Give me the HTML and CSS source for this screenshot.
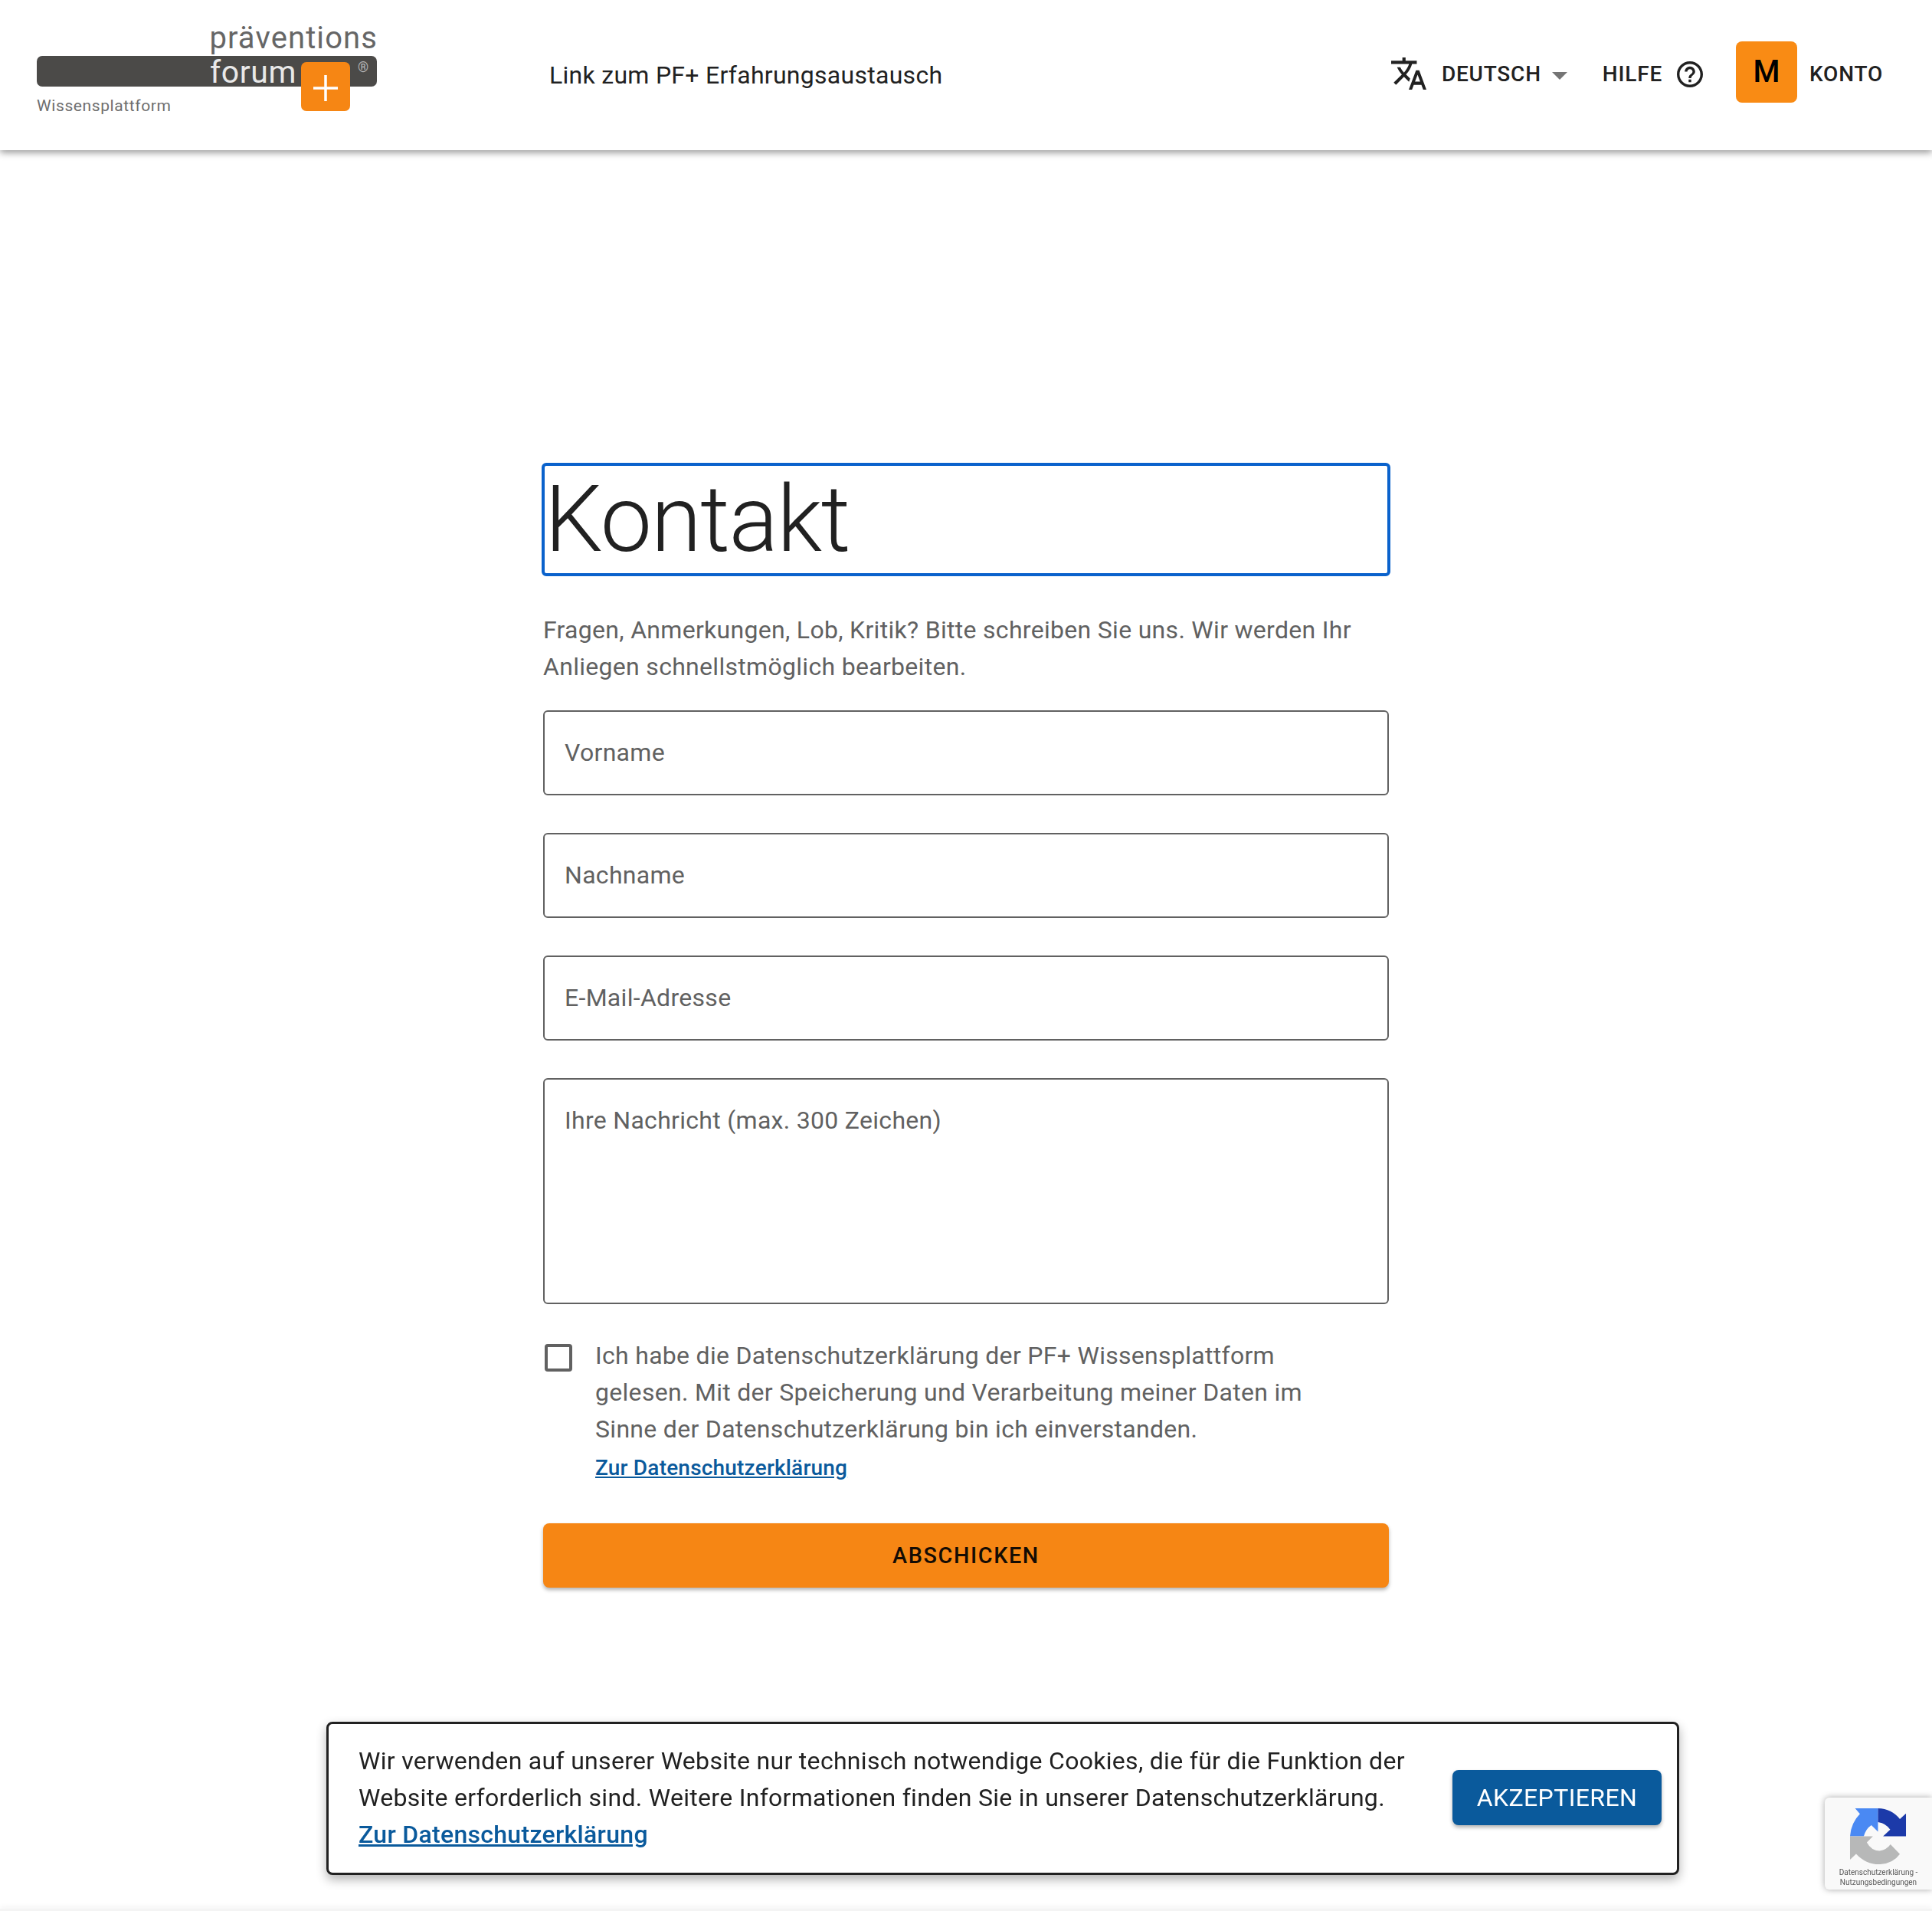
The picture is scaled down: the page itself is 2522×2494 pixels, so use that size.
FILE: index.html
```html
<!DOCTYPE html>
<html lang="de">
<head>
<meta charset="utf-8">
<title>Kontakt</title>
<link rel="stylesheet" href="styles.css">
</head>
<body>
<header class="header">
  <a class="logo">
    <span class="logo-top">präventions</span>
    <span class="logo-bar"></span>
    <span class="logo-forum">forum</span>
    <span class="logo-reg">®</span>
    <span class="logo-plus"><svg viewBox="0 0 64 64" width="64" height="64"><path d="M32 17v34M16 34h32" stroke="#fff" stroke-width="3.5" fill="none"/></svg></span>
    <span class="logo-sub">Wissensplattform</span>
  </a>
  <a class="nav-link">Link zum PF+ Erfahrungsaustausch</a>
  <div class="nav-right">
    <svg class="icon-translate" viewBox="1 2 22 20" width="46" height="42"><path fill="#212121" d="M12.87 15.07l-2.54-2.51.03-.03c1.74-1.94 2.98-4.17 3.71-6.53H17V4h-7V2H8v2H1v1.99h11.17C11.5 7.92 10.44 9.75 9 11.35 8.07 10.32 7.3 9.19 6.69 8h-2c.73 1.63 1.73 3.17 2.98 4.56l-5.09 5.02L4 19l5-5 3.11 3.11.76-2.04zM18.5 10h-2L12 22h2l1.12-3h4.75L21 22h2l-4.5-12zm-2.62 7l1.62-4.33L19.12 17h-3.24z"/></svg>
    <span class="nav-item nav-lang">DEUTSCH</span>
    <span class="caret"></span>
    <span class="nav-item nav-help">HILFE</span>
    <svg class="icon-help" viewBox="2 2 20 20" width="34" height="34"><path fill="#212121" d="M11 18h2v-2h-2v2zm1-16C6.48 2 2 6.48 2 12s4.48 10 10 10 10-4.48 10-10S17.52 2 12 2zm0 18c-4.41 0-8-3.59-8-8s3.59-8 8-8 8 3.59 8 8-3.59 8-8 8zm0-14c-2.21 0-4 1.79-4 4h2c0-1.1.9-2 2-2s2 .9 2 2c0 2-3 1.75-3 5h2c0-2.25 3-2.5 3-5 0-2.21-1.79-4-4-4z"/></svg>
    <span class="avatar">M</span>
    <span class="nav-item nav-account">KONTO</span>
  </div>
</header>

<main class="main">
  <form class="form">
    <h1 class="title">Kontakt</h1>
    <p class="intro">Fragen, Anmerkungen, Lob, Kritik? Bitte schreiben Sie uns. Wir werden Ihr Anliegen schnellstmöglich bearbeiten.</p>
    <input class="field field-line" type="text" placeholder="Vorname">
    <input class="field field-line" type="text" placeholder="Nachname">
    <input class="field field-line" type="text" placeholder="E-Mail-Adresse">
    <textarea class="field field-area" placeholder="Ihre Nachricht (max. 300 Zeichen)"></textarea>
    <div class="consent">
      <span class="checkbox"></span>
      <div class="consent-body">
        <p class="consent-text">Ich habe die Datenschutzerklärung der PF+ Wissensplattform gelesen. Mit der Speicherung und Verarbeitung meiner Daten im Sinne der Datenschutzerklärung bin ich einverstanden.</p>
        <a class="link link-small">Zur Datenschutzerklärung</a>
      </div>
    </div>
    <button class="submit" type="button">ABSCHICKEN</button>
  </form>
</main>

<footer class="footer"></footer>

<aside class="cookie">
  <div class="cookie-text">
    <p>Wir verwenden auf unserer Website nur technisch notwendige Cookies, die für die Funktion der Website erforderlich sind. Weitere Informationen finden Sie in unserer Datenschutzerklärung.</p>
    <a class="link">Zur Datenschutzerklärung</a>
  </div>
  <button class="accept" type="button">AKZEPTIEREN</button>
</aside>

<aside class="recaptcha">
  <svg class="recaptcha-icon" viewBox="340 412 232 232" width="77" height="77">
    <path fill="#4a89f3" d="M366 418H456V510L430 484Q408 498 400 528H346Q350 475 385 440Z"/>
    <path fill="#1c3aa9" d="M456 418Q510 420 542 460L566 438V528H476L504 502Q490 478 456 472Z"/>
    <path fill="#b7b8b8" d="M346 528H436L412 552Q430 585 462 585Q490 582 505 560L542 598Q515 635 465 638Q410 640 370 597L346 620Z"/>
  </svg>
  <span class="recaptcha-text">Datenschutzerklärung -<br>Nutzungsbedingungen</span>
</aside>
</body>
</html>
```

FILE: styles.css
```css
* { box-sizing: border-box; }

html, body {
  margin: 0;
  height: 100%;
  overflow: hidden;
}

body {
  display: flex;
  flex-direction: column;
  background: #fff;
  color: #212121;
  font-family: Roboto, "Liberation Sans", sans-serif;
  font-size: 32px;
  line-height: 48px;
}

p { margin: 0; }

/* Header */
.header {
  flex: none;
  height: 196px;
  display: flex;
  align-items: center;
  background: #fff;
  box-shadow: 0 3px 9px rgba(0, 0, 0, 0.42);
  position: relative;
  z-index: 2;
}

.logo {
  display: block;
  position: relative;
  flex: none;
  width: 444px;
  height: 196px;
  margin-left: 48px;
}

.logo span { position: absolute; }

.logo-top {
  right: -1px;
  top: 26px;
  font-size: 40px;
  line-height: 48px;
  font-weight: 400;
  letter-spacing: 1.1px;
  color: #666;
}

.logo-bar {
  left: 0;
  right: 0;
  top: 73px;
  height: 40px;
  border-radius: 7px;
  background: #4b4a48;
}

.logo-forum {
  left: 226px;
  top: 70px;
  font-size: 41px;
  line-height: 48px;
  font-weight: 400;
  letter-spacing: 0.6px;
  color: #e8e8e8;
}

.logo-reg {
  left: 419px;
  top: 78px;
  font-size: 18px;
  line-height: 20px;
  color: #b8b8b8;
}

.logo-plus {
  left: 345px;
  top: 81px;
  width: 64px;
  height: 64px;
  border-radius: 7px;
  background: #f68614;
}

.logo-plus svg { display: block; }

.logo-sub {
  left: 0;
  top: 124px;
  font-size: 21px;
  line-height: 28px;
  letter-spacing: 0.6px;
  color: #6e6e6e;
}

.nav-link {
  margin-left: 225px;
  line-height: 48px;
  letter-spacing: 0.28px;
}

.nav-right {
  margin-left: auto;
  padding: 0 64px 2px 0;
  display: flex;
  align-items: center;
}

.nav-item {
  font-size: 28px;
  font-weight: 500;
  letter-spacing: 0.8px;
  line-height: 40px;
}

.icon-translate {
  margin: -3px 20px 0 0;
}

.caret {
  width: 0;
  height: 0;
  margin: 4px 0 0 14px;
  border-left: 10px solid transparent;
  border-right: 10px solid transparent;
  border-top: 10px solid #757575;
}

.nav-help { margin-left: 46px; }

.icon-help { margin-left: 19px; }

.avatar {
  width: 80px;
  height: 80px;
  margin: -6px 16px 0 43px;
  border-radius: 8px;
  background: #f98b14;
  color: #000;
  font-size: 40px;
  font-weight: 500;
  display: flex;
  align-items: center;
  justify-content: center;
}

/* Form */
.main {
  flex: 1;
  display: flex;
  justify-content: center;
  padding-top: 408px;
}

.form {
  width: 1104px;
  display: flex;
  flex-direction: column;
}

.title {
  margin: 0 -2px;
  height: 148px;
  padding-left: 0;
  border: 4px solid #0a62cc;
  border-radius: 6px;
  font-size: 120px;
  line-height: 140px;
  font-weight: 300;
  letter-spacing: -1.4px;
  color: #212121;
}

.intro {
  margin: 46px 0 33px;
  color: #616161;
  letter-spacing: 0.3px;
}

.field {
  display: block;
  width: 100%;
  height: 111px;
  margin: 0 0 49px;
  padding: 0 26px;
  border: 2px solid #616161;
  border-radius: 6px;
  background: #fff;
  font: 400 32px/48px Roboto, "Liberation Sans", sans-serif;
  letter-spacing: 0.3px;
  color: #616161;
  outline: none;
  resize: none;
}

.field-line { padding-bottom: 2px; }

.field::placeholder {
  color: #616161;
  opacity: 1;
}

.field-area {
  height: 295px;
  padding-top: 29px;
  margin-bottom: 43px;
}

.consent {
  display: flex;
  align-items: flex-start;
  padding-left: 2px;
}

.checkbox {
  flex: none;
  width: 36px;
  height: 36px;
  margin-top: 9px;
  border: 4px solid #616161;
  border-radius: 4px;
}

.consent-body {
  flex: 1;
  padding: 0 60px 0 30px;
}

.consent-text {
  color: #616161;
  letter-spacing: 0.3px;
}

.link {
  color: #0a5a9c;
  font-weight: 500;
  text-decoration: underline;
}

.link-small {
  display: block;
  margin-top: 6px;
  font-size: 28px;
  line-height: 42px;
  letter-spacing: 0.2px;
}

.submit {
  height: 84px;
  margin-top: 51px;
  border: 0;
  border-radius: 8px;
  background: #f68614;
  color: #140c04;
  font: 500 28.8px/40px Roboto, "Liberation Sans", sans-serif;
  letter-spacing: 1.6px;
  box-shadow: 0 3px 5px rgba(0, 0, 0, 0.3);
}

/* Footer edge */
.footer {
  flex: none;
  height: 3px;
  background: #f4f4f4;
  box-shadow: 0 -2px 6px rgba(0, 0, 0, 0.08);
}

/* Cookie notice */
.cookie {
  position: fixed;
  left: 426px;
  top: 2247px;
  width: 1766px;
  height: 200px;
  padding: 0 20px 2px 39px;
  display: flex;
  align-items: center;
  border: 3px solid #212121;
  border-radius: 8px;
  background: #fff;
  box-shadow: 0 6px 14px rgba(0, 0, 0, 0.3);
  letter-spacing: 0.3px;
  z-index: 3;
}

.cookie-text { width: 1400px; }

.accept {
  flex: none;
  margin-left: auto;
  width: 273px;
  height: 72px;
  border: 0;
  border-radius: 8px;
  background: #0a5a9c;
  color: #fff;
  font: 400 32px/40px Roboto, "Liberation Sans", sans-serif;
  letter-spacing: 0.4px;
  box-shadow: 0 3px 5px rgba(0, 0, 0, 0.3);
}

/* reCAPTCHA badge */
.recaptcha {
  position: fixed;
  left: 2382px;
  top: 2346px;
  width: 140px;
  height: 120px;
  padding-top: 12px;
  border-radius: 6px 0 0 6px;
  background: #f9f9f9;
  box-shadow: 0 0 8px rgba(0, 0, 0, 0.35);
  text-align: center;
  z-index: 3;
}

.recaptcha-icon {
  display: block;
  margin-left: 31px;
}

.recaptcha-text {
  display: block;
  margin: 3px 0 0 0;
  font-size: 10px;
  line-height: 12.5px;
  color: #555;
  white-space: nowrap;
}
```
